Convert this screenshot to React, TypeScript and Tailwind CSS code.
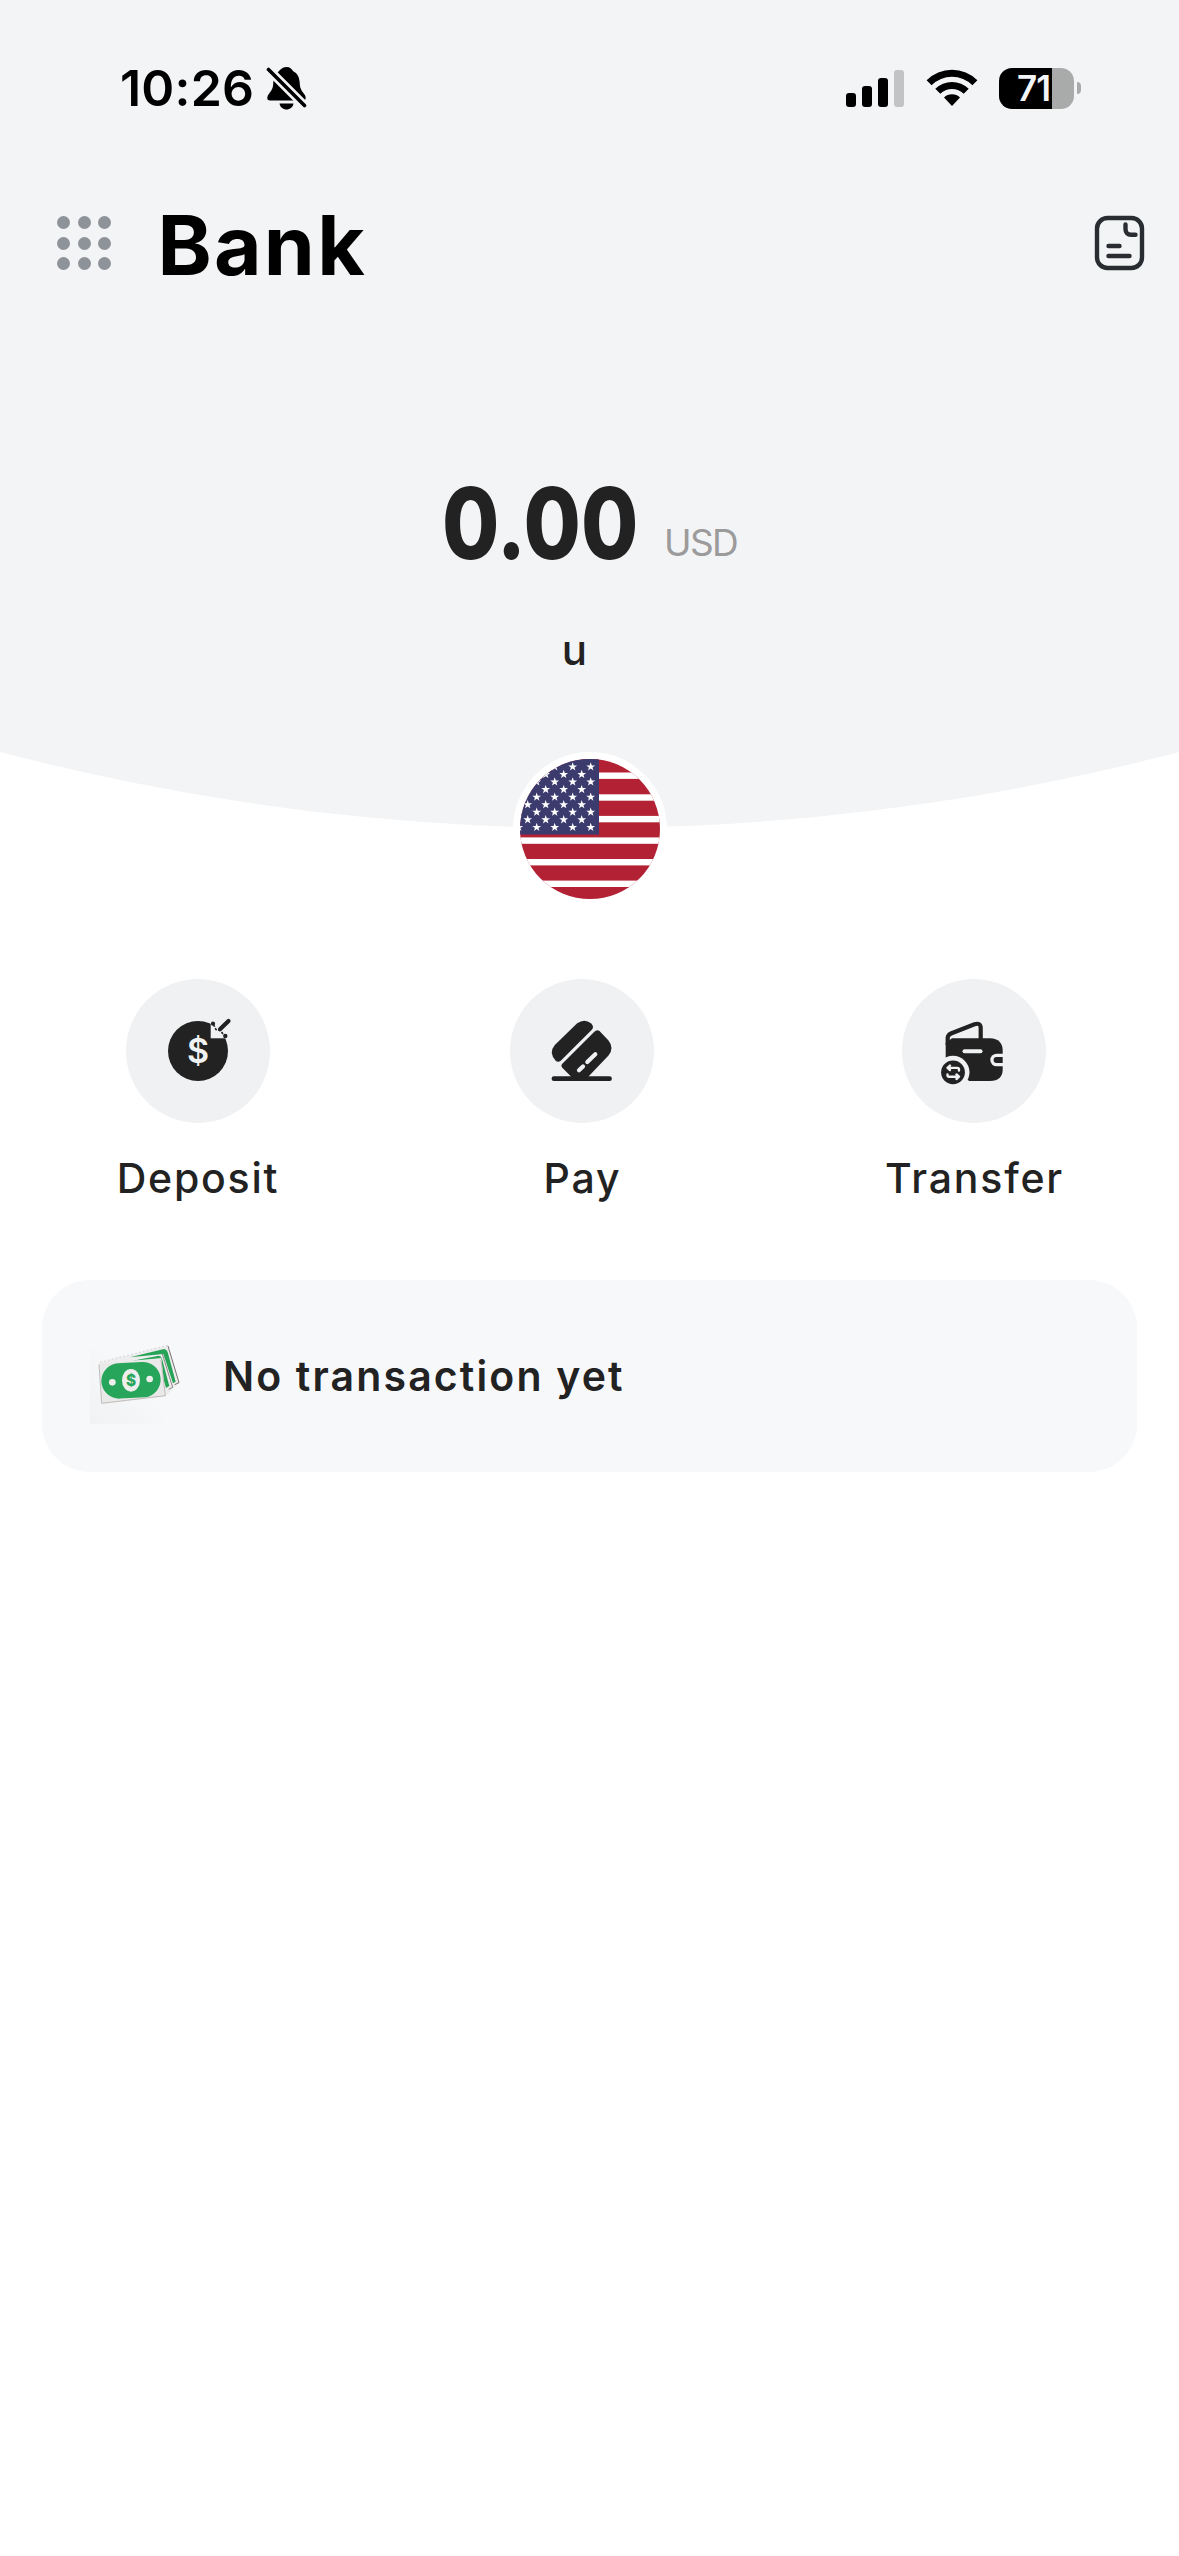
const starRows = [0, 1, 2, 3, 4, 5, 6, 7, 8];
const starCols = [0, 1, 2, 3, 4];
const whiteStripes = [13.5, 35.3, 56.9, 78.4, 100, 121.6];
const dots = [0, 1, 2, 3, 4, 5, 6, 7, 8];

function BellOff() {
    return (
        <svg className="ml-[12px] h-[44px] w-[42px]" viewBox="0 0 42 44">
            <path
                d="M20.5 1C16 1 13.500 4.500 12.500 5.500C9 9 7.500 12 7.200 18C7 23 5 25 2.500 28.500C.5 31.500 1 34.500 4 34.500H37C40 34.500 40.500 31.500 38.500 28.500C36 25 34 23 33.800 18C33.500 11 31.500 7.500 27.500 5.500C25.500 3 24 1 20.500 1Z"
                fill="#000"
            />
            <path d="M13.500 37.500H27.500C27 41 24 43.500 20.500 43.500S14 41 13.500 37.500Z" fill="#000" />
            <path d="M2 3L39 40" stroke="#f3f4f6" strokeWidth="9" />
            <path d="M2.500 3.500L38.500 39.500" stroke="#000" strokeWidth="3.600" strokeLinecap="round" />
        </svg>
    );
}

function Signal() {
    return (
        <div className="flex h-[37px] items-end gap-[6px]">
            <span className="h-[14px] w-[10px] rounded-[3px] bg-black" />
            <span className="h-[21px] w-[10px] rounded-[3px] bg-black" />
            <span className="h-[29px] w-[10px] rounded-[3px] bg-black" />
            <span className="h-[37px] w-[10px] rounded-[3px] bg-[#c2c3c5]" />
        </div>
    );
}

function Wifi() {
    return (
        <svg className="ml-[22px] h-[38px] w-[52px]" viewBox="0 0 52 38">
            <path d="M.6 11.200A36 36 0 0 1 51.400 11.200L46.400 16.200A29 29 0 0 0 5.600 16.200Z" fill="#000" />
            <path d="M9.300 19.800A23.600 23.600 0 0 1 42.700 19.800L37.700 24.800A16.500 16.500 0 0 0 14.300 24.800Z" fill="#000" />
            <path d="M18 28.600A11.300 11.300 0 0 1 34 28.600L26 37Z" fill="#000" />
        </svg>
    );
}

function Battery() {
    return (
        <div className="ml-[21px] flex items-center gap-[3px]">
            <div className="flex h-[41px] w-[75px] items-center overflow-hidden rounded-[13px] bg-[linear-gradient(90deg,#000_53px,#a9abab_53px)]">
                <span className="pl-[18px] text-[35px] leading-none font-semibold tracking-[-1px] text-[#f3f4f6]">71</span>
            </div>
            <span className="h-[12px] w-[4px] rounded-r-full bg-[#a9abab]" />
        </div>
    );
}

function DocIcon() {
    return (
        <svg className="mb-[5px] h-[56px] w-[51px]" viewBox="0 0 51 56" fill="none" stroke="#292d32" strokeWidth="4.400" strokeLinecap="round">
            <rect x="3" y="3" width="45" height="50" rx="10.500" />
            <path d="M31.500 9.500V14C31.500 17.500 33.500 19.700 37 19.700H41.500" />
            <path d="M14.500 31H25.500M14.500 41H35.500" />
        </svg>
    );
}

function Flag() {
    return (
        <svg className="size-[140px] rounded-full" viewBox="0 0 140 140">
            <rect width="140" height="140" fill="#b22234" />
            {whiteStripes.map((y) => (
                <rect key={y} y={y} width="140" height="6.400" fill="#fff" />
            ))}
            <rect width="79" height="75.500" fill="#3c3b6e" />
            {starRows.map((r) =>
                starCols.map((c) => (
                    <path
                        key={`${r}-${c}`}
                        transform={`translate(${70.7 - (r % 2) * 9 - c * 18} ${7.700 + r * 7.560})`}
                        d="M0-4.500L1.100-1.300L4.400-1.300L1.800.7L2.700 3.800L0 1.900L-2.700 3.800L-1.800.7L-4.400-1.300L-1.100-1.300Z"
                        fill="#fff"
                    />
                ))
            )}
        </svg>
    );
}

function DepositIcon() {
    return (
        <svg className="size-[144px]" viewBox="0 0 144 144">
            <circle cx="72" cy="72" r="30" fill="#222" />
            <text x="72" y="84" textAnchor="middle" fontSize="34" fontWeight="600" letterSpacing="0" fill="#f0f1f3">$</text>
            <path d="M84.700 38V59.300H103V38Z" fill="#f0f1f3" />
            <path d="M102.500 41.900L94 50.200" stroke="#222" strokeWidth="4.200" strokeLinecap="round" />
            <circle cx="87" cy="44.700" r="2.100" fill="#222" />
            <circle cx="99.300" cy="57" r="2.200" fill="#222" />
            <path d="M87.500 45.500L90 50.500L94.500 51.500L98 56.500" stroke="#222" strokeWidth="1.600" strokeDasharray="2.500 1.500" fill="none" />
        </svg>
    );
}

function PayIcon() {
    return (
        <svg className="size-[144px]" viewBox="0 0 144 144">
            <g fill="#222">
                <path d="M44.800 66L67.200 44.300Q74.500 39 81.300 44.500Q84.500 48 81.800 50.800L51 81.400Q48 84 45.500 81.500Q38.500 73.500 44.800 66Z" />
                <path d="M84.300 52.700Q87 50 89.500 52L98.500 61.500Q104.500 69 98.500 76.500L78 98H61.500L52.300 88.800Q50.500 86.500 52.500 84.500Z" />
            </g>
            <path d="M44 99.700H99.500" stroke="#222" strokeWidth="4.800" strokeLinecap="round" />
            <path d="M77.300 83L85.300 75.300M69 91.300L73 87.500" stroke="#f0f1f3" strokeWidth="4.200" strokeLinecap="round" />
        </svg>
    );
}

function TransferIcon() {
    return (
        <svg className="size-[144px]" viewBox="0 0 144 144">
            <path d="M45.700 66V58.500Q46 56 49 54.500L72.500 45.300Q78.700 43.300 78.700 49V62" stroke="#222" strokeWidth="4.200" fill="none" />
            <path d="M43.700 64L50 59.300H88Q100.700 60 100.700 72V90Q100.700 102 88 102H43.700Z" fill="#222" />
            <path d="M102 74.700H94.600A6.300 6.300 0 0 0 94.600 87.300H102Z" fill="#f0f1f3" />
            <path d="M100.700 78.100H94.500A2.900 2.900 0 0 0 94.500 83.900H100.700Z" fill="#222" />
            <path d="M62.500 72.200H78.500" stroke="#f0f1f3" strokeWidth="4" strokeLinecap="round" />
            <circle cx="51" cy="93.300" r="16.500" fill="#f0f1f3" />
            <path d="M34 96V106H66.500V101Z" fill="#f0f1f3" />
            <circle cx="51" cy="93.300" r="11.900" fill="#222" />
            <g stroke="#f0f1f3" strokeWidth="2.400" strokeLinecap="round" strokeLinejoin="round" fill="none">
                <path d="M57 91.500V90.500Q57 88.900 55.300 88.900H46M48 86.500L45.500 88.900L48 91" />
                <path d="M45.500 95.500V96Q45.500 97.700 47 97.700H56.500M54.500 95.500L57 97.700L54.500 100" />
            </g>
        </svg>
    );
}

function Money() {
    return (
        <svg className="mt-[8px] h-[100px] w-[110px]" viewBox="0 0 330 300">
            <defs>
                <linearGradient id="shade" x1="0" y1="1" x2="1" y2="0">
                    <stop offset="0" stopColor="#f1f2f3" />
                    <stop offset="0.6" stopColor="#f7f8fa" />
                </linearGradient>
            </defs>
            <rect x="30" y="50" width="220" height="232" fill="url(#shade)" />
            <path d="M60 98L264 47L297 158L255 200L65 222Z" fill="#ededed" />
            <path d="M264 48L297 158L284 164" stroke="#77716f" strokeWidth="3" fill="none" />
            <path d="M150 82L252 57Q261 58 264 70L287 155L279 160L250 72Z" fill="#27a357" />
            <path d="M247 72L278 172L266 178" stroke="#8b8785" strokeWidth="3" fill="none" />
            <path d="M158 92L236 77Q243 77 246 86L268 168L258 174L234 88Z" fill="#27a357" />
            <path d="M56 102L244 84L257 198L65 221Z" fill="#e8e9e8" />
            <path d="M57 103L65 220L256 197L243 90" stroke="#b9b5b2" strokeWidth="2.500" fill="none" />
            <path d="M60 97L264 46" stroke="#d9dad9" strokeWidth="4" strokeDasharray="6 6" />
            <rect x="64" y="98" width="178" height="106" rx="53" fill="#27a55a" transform="rotate(-3 153 151)" />
            <ellipse cx="153" cy="151" rx="27" ry="34" fill="#eeefed" />
            <circle cx="97" cy="157" r="10" fill="#eeefed" />
            <circle cx="209" cy="147" r="10" fill="#eeefed" />
            <text x="153" y="167" textAnchor="middle" fontSize="46" fontWeight="800" fill="#27a55a">$</text>
        </svg>
    );
}

export default function App() {
    return (
        <main className="min-h-[2556px] w-[1179px] bg-white font-['Inter',sans-serif] text-[#222]">
            <section className="h-[828px] bg-[#f3f4f6] [clip-path:circle(2324px_at_50%_-1496px)]">
                <div className="flex h-[176px] items-center justify-between pr-[98px] pl-[120px]">
                    <div className="flex items-center">
                        <span className="text-[50px] leading-none font-semibold tracking-[0.2px] text-black">10:26</span>
                        <BellOff />
                    </div>
                    <div className="flex items-center">
                        <Signal />
                        <Wifi />
                        <Battery />
                    </div>
                </div>
                <header className="flex h-[138px] items-center justify-between pr-[34px] pl-[57px]">
                    <div className="flex items-center">
                        <div className="mb-[4px] grid grid-cols-3 gap-[7.700px]">
                            {dots.map((d) => (
                                <span key={d} className="size-[13px] rounded-full bg-[#8e939a]" />
                            ))}
                        </div>
                        <h1 className="mt-[1px] ml-[46px] text-[82px] leading-none font-bold tracking-[2.300px] text-black">Bank</h1>
                    </div>
                    <DocIcon />
                </header>
                <div className="flex items-baseline justify-center pt-[160px]">
                    <span className="w-[197px] origin-left scale-x-[0.838] text-[99px] leading-none font-extrabold">0.00</span>
                    <span className="relative -top-[3px] ml-[25px] text-[37px] leading-none tracking-[-1.700px] text-[#9b9b9b]">USD</span>
                </div>
                <p className="mt-[56px] pr-[30px] text-center text-[42px] leading-none font-medium">u</p>
            </section>
            <div className="relative mx-auto -mt-[76px] flex size-[154px] items-center justify-center rounded-full bg-white">
                <Flag />
            </div>
            <nav className="mt-[73px] flex justify-between pr-[116px] pl-[112px] text-[41px] leading-none font-medium tracking-[1.800px]">
                <div className="flex w-[172px] flex-col items-center">
                    <div className="rounded-full bg-[#f0f1f3]"><DepositIcon /></div>
                    <span className="mt-[35px]">Deposit</span>
                </div>
                <div className="-ml-[4px] flex w-[86px] flex-col items-center">
                    <div className="-mx-[29px] rounded-full bg-[#f0f1f3]"><PayIcon /></div>
                    <span className="mt-[35px] pl-[1px]">Pay</span>
                </div>
                <div className="flex w-[179px] flex-col items-center">
                    <div className="rounded-full bg-[#f0f1f3]"><TransferIcon /></div>
                    <span className="mt-[35px] pl-[2px]">Transfer</span>
                </div>
            </nav>
            <div className="mx-[42px] mt-[81px] flex h-[192px] items-center rounded-[48px] bg-[#f7f8fa] pl-[38px]">
                <Money />
                <span className="ml-[33px] text-[41px] leading-none font-semibold tracking-[2.150px]">No transaction yet</span>
            </div>
        </main>
    );
}
